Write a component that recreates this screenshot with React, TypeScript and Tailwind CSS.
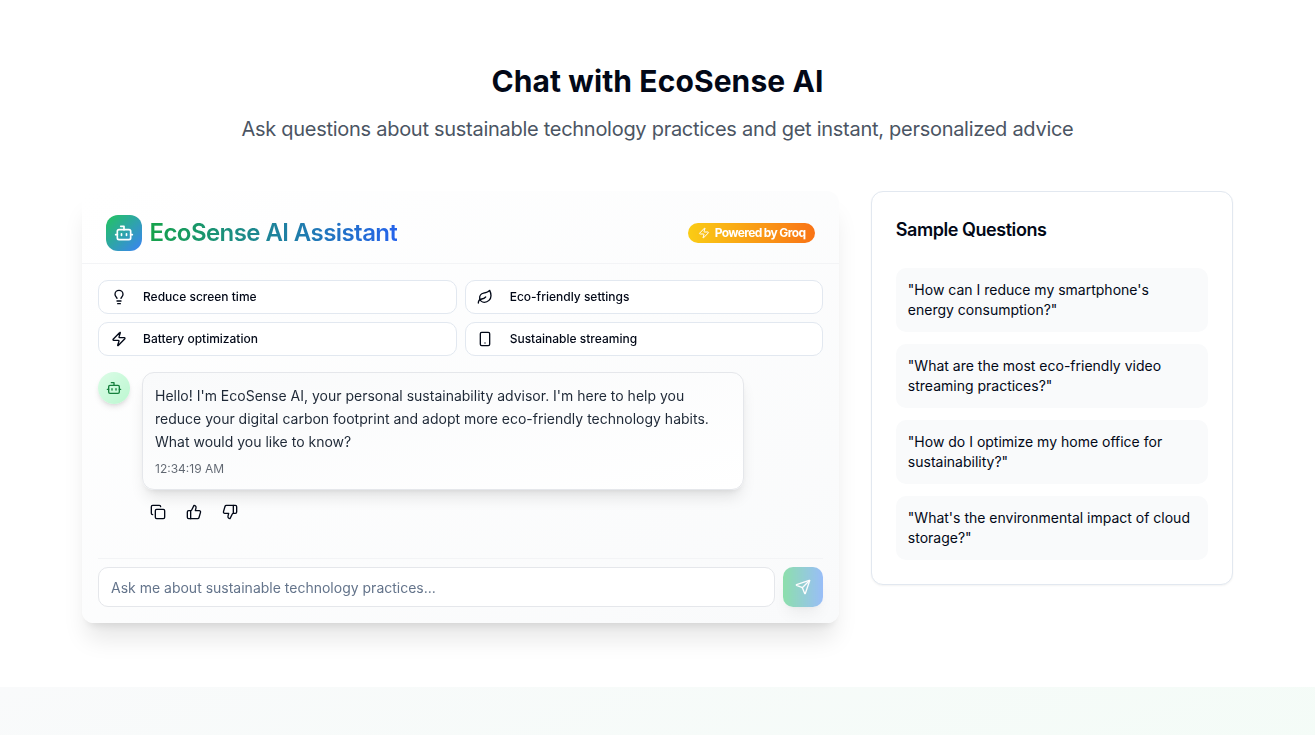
import { Bot, Copy, Leaf, Lightbulb, Send, Smartphone, ThumbsDown, ThumbsUp, Zap } from "lucide-react";

const topics = [
  { label: "Reduce screen time", icon: Lightbulb },
  { label: "Eco-friendly settings", icon: Leaf },
  { label: "Battery optimization", icon: Zap },
  { label: "Sustainable streaming", icon: Smartphone },
];

const questions = [
  "How can I reduce my smartphone's energy consumption?",
  "What are the most eco-friendly video streaming practices?",
  "How do I optimize my home office for sustainability?",
  "What's the environmental impact of cloud storage?",
];

const actions = [
  { label: "Copy", icon: Copy },
  { label: "Helpful", icon: ThumbsUp },
  { label: "Not helpful", icon: ThumbsDown },
];

function ChatCard() {
  return (
    <div className="col-span-2 flex h-[432px] flex-col rounded-xl bg-linear-to-br/srgb from-white to-[#f9fafb] shadow-xl will-change-transform">
      <div className="flex items-center justify-between border-b border-[#f3f4f6] px-6 pt-6 pb-3">
        <div className="flex h-9 items-center gap-2">
          <div className="rounded-xl bg-linear-to-br/srgb from-[#22c55e] to-[#3b82f6] p-2 text-white">
            <Bot className="size-5" />
          </div>
          <h3 className="-ml-px bg-linear-to-r/srgb from-[#16a34a] to-[#2563eb] bg-clip-text pl-[0.5px] text-2xl font-[560] tracking-[-0.57px] text-transparent">
            EcoSense AI Assistant
          </h3>
        </div>
        <div className="flex items-center rounded-full bg-linear-to-r/srgb from-[#facc15] to-[#f97316] px-2.5 py-0.5 text-xs font-bold tracking-[-0.63px] text-white">
          <Zap className="mr-[5px] size-3" />
          Powered by Groq
        </div>
      </div>
      <div className="flex flex-1 flex-col p-4">
        <div className="grid grid-cols-2 gap-2">
          {topics.map(({ label, icon: Icon }) => (
            <button
              key={label}
              className="group flex items-center gap-4 rounded-[10px] border border-[#e2e8f0] bg-white px-3 py-2 text-xs font-medium"
            >
              <Icon className="size-4 group-even:mr-[0.5px] group-even:-ml-[0.5px]" />
              {label}
            </button>
          ))}
        </div>
        <div className="mt-4 flex gap-3">
          <div className="flex size-8 shrink-0 items-center justify-center rounded-full bg-linear-to-br/srgb from-[#dcfce7] to-[#bbf7d0] text-[#15803d] shadow-md">
            <Bot className="size-4" />
          </div>
          <div className="w-[602px]">
            <div className="rounded-xl border border-[#e5e7eb] bg-linear-to-br/srgb from-[#f9fafb] to-white p-3 text-[#1f2937] shadow-lg">
              <p className="text-sm leading-[22.75px]">
                Hello! I'm EcoSense AI, your personal sustainability advisor. I'm here to help you reduce your digital
                carbon footprint and adopt more eco-friendly technology habits. What would you like to know?
              </p>
              <p className="mt-2 text-xs opacity-70">12:34:19 AM</p>
            </div>
            <div className="mt-1.5 flex gap-1">
              {actions.map(({ label, icon: Icon }) => (
                <button key={label} aria-label={label} className="flex size-8 items-center justify-center">
                  <Icon className="size-4" />
                </button>
              ))}
            </div>
          </div>
        </div>
        <div className="mt-auto flex gap-2 border-t border-[#f3f4f6] pt-2">
          <input
            placeholder="Ask me about sustainable technology practices..."
            className="h-10 min-w-0 flex-1 rounded-[10px] border border-[#e5e7eb] bg-white px-3 text-sm placeholder:text-[#64748b]"
          />
          <button
            aria-label="Send"
            disabled
            className="flex size-10 items-center justify-center rounded-[10px] bg-linear-to-r/srgb from-[#22c55e] to-[#3b82f6] text-white opacity-50 shadow-lg"
          >
            <Send className="size-4" />
          </button>
        </div>
      </div>
    </div>
  );
}

function SampleQuestions() {
  return (
    <div className="self-start rounded-xl border border-[#e2e8f0] bg-white p-6 shadow-[0_1px_2px_0_rgb(0_0_0/0.05)]">
      <h3 className="text-lg leading-7 font-semibold tracking-tight">Sample Questions</h3>
      <div className="mt-6 flex flex-col gap-3">
        {questions.map((question) => (
          <div key={question} className="rounded-[10px] bg-[#f9fafb] p-3 text-sm">
            {`"${question}"`}
          </div>
        ))}
      </div>
    </div>
  );
}

export default function App() {
  return (
    <div className="h-[735px] overflow-hidden bg-white font-['Inter',sans-serif] text-[#020817]">
      <section className="h-[687px] pt-[63px]">
        <div className="mx-auto w-[1152px]">
          <div className="mb-12 text-center">
            <h2 className="mb-4 text-3xl font-bold tracking-[0.1px]">Chat with EcoSense AI</h2>
            <p className="text-xl tracking-[-0.28px] text-[#4b5563]">
              Ask questions about sustainable technology practices and get instant, personalized advice
            </p>
          </div>
          <div className="grid grid-cols-3 gap-8">
            <ChatCard />
            <SampleQuestions />
          </div>
        </div>
      </section>
      <section className="h-[480px] bg-linear-to-br/srgb from-[#f9fafb] to-[#f0fdf4]" />
    </div>
  );
}
